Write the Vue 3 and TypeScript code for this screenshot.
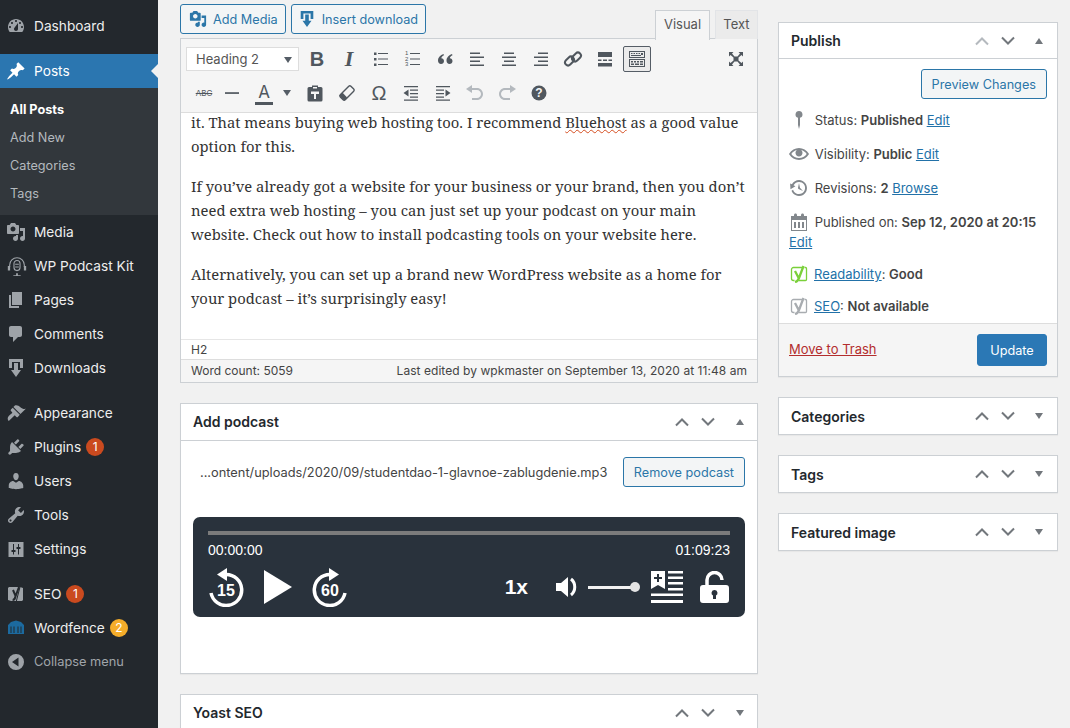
<template>
  <div class="page">
    <aside class="sidebar">
      <template v-for="item in menu" :key="item.label">
        <a class="menu-item" :class="{ active: item.active, gap: item.gap, dim: item.dim }">
          <span class="menu-icon">
            <svg v-if="item.icon === 'podcast'" viewBox="0 0 24 24" width="22" height="22">
              <path d="M4 13v-2a8 8 0 0 1 16 0v2" class="line" />
              <path d="M2 12h2.500v5H2zM19.500 12H22v5h-2.500z" />
              <rect x="8.700" y="6" width="6.600" height="11" rx="3.300" class="line" />
              <path d="M11 20h2v2h3v1H8v-1h3zM10 9.500h4v1h-4zM10 12.500h4v1h-4z" />
            </svg>
            <svg v-else-if="item.icon === 'seo'" viewBox="0 0 20 20" width="20" height="20">
              <path d="M3 3h11l3 1v12l-1 1H5l-3-1V4z" />
              <path d="M7 6l2.600 6L13 3M9.600 12c-.5 3-1.600 4-3 4" class="cut" />
              <path d="M14.500 1L10 18.500" class="slash" />
            </svg>
            <svg v-else-if="item.icon === 'wordfence'" viewBox="0 0 20 20" width="20" height="20" class="fence">
              <path d="M2 7l3-3 5-1.500L15 4l3 3v9H2zM4.500 8.500V15h1V8.500zM7.500 8.500V15h1V8.500zM11.500 8.500V15h1V8.500zM14.500 8.500V15h1V8.500z" fill-rule="evenodd" />
            </svg>
            <svg v-else viewBox="0 0 20 20" width="20" height="20"><path :d="icons[item.icon]" fill-rule="evenodd" /></svg>
          </span>
          <span class="menu-label">{{ item.label }}</span>
          <span v-if="item.badge" class="badge" :class="item.badgeClass">{{ item.badge }}</span>
        </a>
        <div v-if="item.active" class="submenu">
          <a v-for="(s, i) in subItems" :key="s" :class="{ current: i === 0 }">{{ s }}</a>
        </div>
      </template>
    </aside>

    <main class="content">
      <section class="col-main">
        <div class="editor-top">
          <button class="btn icon-btn">
            <svg viewBox="0 0 20 20" width="18" height="18"><path :d="icons.media" /></svg>
            Add Media
          </button>
          <button class="btn icon-btn tight">
            <svg viewBox="0 0 20 20" width="18" height="18"><path :d="icons.download" /></svg>
            Insert download
          </button>
          <div class="tabs">
            <span class="tab on">Visual</span>
            <span class="tab">Text</span>
          </div>
        </div>

        <div class="editor">
          <div class="toolbar">
            <div class="tool-row">
              <div class="format-select">Heading 2<i class="caret"></i></div>
              <span v-for="t in row1" :key="t.id" class="tool" :class="{ pressed: t.pressed }" :style="toolStyle(t)">
                <b v-if="t.text && t.id === 'bold'" class="glyph-b">{{ t.text }}</b>
                <em v-else-if="t.text" class="glyph-i">{{ t.text }}</em>
                <svg v-else-if="t.id === 'ol'" viewBox="0 0 20 20" width="20" height="20">
                  <text x="2" y="6" class="mini">1</text>
                  <text x="2" y="11.500" class="mini">2</text>
                  <text x="2" y="17" class="mini">3</text>
                  <path d="M7 4h10v1H7zM7 9.500h10v1H7zM7 15h10v1H7z" />
                </svg>
                <svg v-else-if="t.id === 'link'" viewBox="0 0 20 20" width="20" height="20">
                  <g class="line2">
                    <rect x="1.500" y="9" width="10" height="6" rx="3" transform="rotate(-45 6.500 12)" />
                    <rect x="8.500" y="5" width="10" height="6" rx="3" transform="rotate(-45 13.500 8)" />
                  </g>
                </svg>
                <svg v-else viewBox="0 0 20 20" width="20" height="20"><path :d="tools[t.id]" fill-rule="evenodd" /></svg>
              </span>
            </div>
            <div class="tool-row">
              <span v-for="t in row2" :key="t.id" class="tool" :style="toolStyle(t)">
                <span v-if="t.id === 'strike'" class="glyph-abc">ABC</span>
                <span v-else-if="t.id === 'color'" class="glyph-a">A</span>
                <span v-else-if="t.id === 'omega'" class="glyph-o">Ω</span>
                <i v-else-if="t.id === 'caret'" class="caret small"></i>
                <svg v-else-if="t.id === 'help'" viewBox="0 0 20 20" width="20" height="20">
                  <circle cx="10" cy="10" r="7.500" />
                  <text x="10" y="14" text-anchor="middle" class="help-q">?</text>
                </svg>
                <svg v-else-if="t.id === 'eraser'" viewBox="0 0 20 20" width="20" height="20">
                  <g transform="rotate(-45 10 10)">
                    <rect x="2.500" y="6.500" width="15" height="7" rx="1.500" class="line2 slim" />
                    <rect x="2.500" y="6.500" width="4.500" height="7" rx="1" />
                  </g>
                </svg>
                <svg v-else viewBox="0 0 20 20" width="20" height="20" :class="{ faded: t.id === 'undo' || t.id === 'redo' }">
                  <path :d="tools[t.id]" fill-rule="evenodd" :transform="t.id === 'redo' ? 'matrix(-1 0 0 1 20 0)' : undefined" />
                </svg>
              </span>
            </div>
          </div>
          <div class="post-body">
            <p>it. That means buying web hosting too. I recommend <span class="misspelled">Bluehost</span> as a good value option for this.</p>
            <p>If you’ve already got a website for your business or your brand, then you don’t need extra web hosting – you can just set up your podcast on your main website. Check out how to install podcasting tools on your website here.</p>
            <p>Alternatively, you can set up a brand new WordPress website as a home for your podcast – it’s surprisingly easy!</p>
          </div>
          <div class="path-bar">H2</div>
          <div class="status-bar">
            <span>Word count: 5059</span>
            <span class="edited">Last edited by wpkmaster on September 13, 2020 at 11:48 am</span>
          </div>
        </div>

        <div class="box podcast-box">
          <div class="box-head">
            <h2>Add podcast</h2>
            <span class="handles wide">
              <svg viewBox="0 0 16 10" width="16" height="10"><path d="M2 8.500l6-6 6 6" /></svg>
              <svg viewBox="0 0 16 10" width="16" height="10"><path d="M2 1.500l6 6 6-6" /></svg>
              <i class="tri up"></i>
            </span>
          </div>
          <div class="podcast-file">
            <span>...ontent/uploads/2020/09/studentdao-1-glavnoe-zablugdenie.mp3</span>
            <button class="btn">Remove podcast</button>
          </div>
          <div class="player">
            <div class="progress"></div>
            <div class="times"><span>00:00:00</span><span>01:09:23</span></div>
            <div class="controls">
              <div class="ctl-left">
                <span class="skip">
                  <svg viewBox="0 0 36 40" width="36" height="40">
                    <path d="M18 7.500A15.500 15.500 0 1 1 3 26" class="arc" />
                    <path d="M9 7.500L19 1v13z" />
                  </svg>
                  <b>15</b>
                </span>
                <svg viewBox="0 0 28 34" width="28" height="34" class="play"><path d="M0 0l28 17L0 34z" /></svg>
                <span class="skip">
                  <svg viewBox="0 0 36 40" width="36" height="40">
                    <path d="M18 7.500A15.500 15.500 0 1 0 33 26" class="arc" />
                    <path d="M27 7.500L17 1v13z" />
                  </svg>
                  <b>60</b>
                </span>
              </div>
              <div class="ctl-right">
                <b class="speed">1x</b>
                <svg viewBox="0 0 23 22" width="23" height="22" class="vol">
                  <path d="M0 7h5l7-6v20l-7-6H0z" />
                  <path d="M15 3c5 4 5 12 0 16" class="arc thin" />
                </svg>
                <span class="slider"><i></i></span>
                <svg viewBox="0 0 32 32" width="32" height="32" class="chapters">
                  <path d="M0 0h14v18l-7-4-7 4zM6 3v3H3v2h3v3h2V8h3V6H8V3z" fill-rule="evenodd" />
                  <path d="M17 0h15v2.500H17zM17 5.500h15V8H17zM17 11h15v2.500H17zM17 17h15v2.500H17zM0 22.500h32V25H0zM0 29h32v3H0z" />
                </svg>
                <svg viewBox="0 0 29 32" width="29" height="32" class="lock">
                  <path d="M7 14V9a7.500 7.500 0 0 1 15 0" class="arc" />
                  <path d="M3 14h23a3 3 0 0 1 3 3v12a3 3 0 0 1-3 3H3a3 3 0 0 1-3-3V17a3 3 0 0 1 3-3zM14.500 19a3 3 0 0 0-1.500 5.600V28h3v-3.400A3 3 0 0 0 14.500 19z" fill-rule="evenodd" />
                </svg>
              </div>
            </div>
          </div>
        </div>

        <div class="box">
          <div class="box-head">
            <h2>Yoast SEO</h2>
            <span class="handles wide">
              <svg viewBox="0 0 16 10" width="16" height="10"><path d="M2 8.500l6-6 6 6" /></svg>
              <svg viewBox="0 0 16 10" width="16" height="10"><path d="M2 1.500l6 6 6-6" /></svg>
              <i class="tri"></i>
            </span>
          </div>
          <div class="yoast-rest"></div>
        </div>
      </section>

      <section class="col-side">
        <div class="box publish">
          <div class="box-head">
            <h2>Publish</h2>
            <span class="handles">
              <svg viewBox="0 0 16 10" width="16" height="10" class="off"><path d="M2 8.500l6-6 6 6" /></svg>
              <svg viewBox="0 0 16 10" width="16" height="10"><path d="M2 1.500l6 6 6-6" /></svg>
              <i class="tri up"></i>
            </span>
          </div>
          <div class="preview-row"><button class="btn">Preview Changes</button></div>
          <div class="pub-row">
            <svg viewBox="0 0 20 20" width="20" height="20"><path d="M10 1a3.500 3.500 0 0 1 1 6.850V15l-1 4-1-4V7.850A3.500 3.500 0 0 1 10 1z" /></svg>
            Status: <b>Published</b> <a>Edit</a>
          </div>
          <div class="pub-row">
            <svg viewBox="0 0 20 20" width="20" height="20"><path :d="icons.eye" /></svg>
            Visibility: <b>Public</b> <a>Edit</a>
          </div>
          <div class="pub-row">
            <svg viewBox="0 0 20 20" width="20" height="20"><path :d="icons.backup" /></svg>
            Revisions: <b>2</b> <a>Browse</a>
          </div>
          <div class="pub-row">
            <svg viewBox="0 0 20 20" width="20" height="20"><path :d="icons.calendar" fill-rule="evenodd" /></svg>
            Published on: <b>Sep 12, 2020 at 20:15</b> <a>Edit</a>
          </div>
          <div class="pub-row seo-row">
            <svg viewBox="0 0 20 20" width="20" height="20" class="yoast good">
              <path d="M13 3.500H4.500A2 2 0 0 0 2.500 5.500v9a2 2 0 0 0 2 2h1M15.500 3.500h1a1 1 0 0 1 1 1v11a1 1 0 0 1-1 1H10" class="y-frame" />
              <path d="M6 7l3.400 6.500M14.500 2l-4.500 12c-.7 2-1.700 3.500-4 4" class="y-mark" />
            </svg>
            <a>Readability</a>: <b>Good</b>
          </div>
          <div class="pub-row seo-row">
            <svg viewBox="0 0 20 20" width="20" height="20" class="yoast none">
              <path d="M13 3.500H4.500A2 2 0 0 0 2.500 5.500v9a2 2 0 0 0 2 2h1M15.500 3.500h1a1 1 0 0 1 1 1v11a1 1 0 0 1-1 1H10" class="y-frame" />
              <path d="M6 7l3.400 6.500M14.500 2l-4.500 12c-.7 2-1.700 3.500-4 4" class="y-mark" />
            </svg>
            <a>SEO</a>: <b>Not available</b>
          </div>
          <div class="pub-actions">
            <a class="trash">Move to Trash</a>
            <button class="btn primary">Update</button>
          </div>
        </div>

        <div v-for="name in closedBoxes" :key="name" class="box">
          <div class="box-head">
            <h2>{{ name }}</h2>
            <span class="handles">
              <svg viewBox="0 0 16 10" width="16" height="10"><path d="M2 8.500l6-6 6 6" /></svg>
              <svg viewBox="0 0 16 10" width="16" height="10"><path d="M2 1.500l6 6 6-6" /></svg>
              <i class="tri"></i>
            </span>
          </div>
        </div>
      </section>
    </main>
  </div>
</template>

<script setup lang="ts">
interface MenuItem {
  label: string
  icon: string
  active?: boolean
  gap?: boolean
  dim?: boolean
  badge?: string
  badgeClass?: string
}

interface Tool {
  id: string
  text?: string
  w?: number
  ml?: number
  pressed?: boolean
}

const icons: Record<string, string> = {
  dashboard:
    'M3.760 16h12.480c1.100-1.370 1.760-3.110 1.760-5 0-4.420-3.580-8-8-8s-8 3.580-8 8c0 1.890.66 3.630 1.760 5zM10 4c.55 0 1 .45 1 1s-.45 1-1 1-1-.45-1-1 .45-1 1-1zM6 6c.55 0 1 .45 1 1s-.45 1-1 1-1-.45-1-1 .45-1 1-1zm8 0c.55 0 1 .45 1 1s-.45 1-1 1-1-.45-1-1 .45-1 1-1zm-5.370 5.550L12 7v6c0 1.100-.9 2-2 2s-2-.9-2-2c0-.57.24-1.080.63-1.450zM4 10c.55 0 1 .45 1 1s-.45 1-1 1-1-.45-1-1 .45-1 1-1zm12 0c.55 0 1 .45 1 1s-.45 1-1 1-1-.45-1-1 .45-1 1-1z',
  pin: 'M10.440 3.020l1.820-1.820 6.360 6.350-1.830 1.820c-1.050-.68-2.480-.57-3.410.36l-.75.75c-.92.93-1.040 2.350-.35 3.410l-1.830 1.820-2.410-2.410-2.800 2.790c-.42.42-3.380 2.710-3.800 2.290s1.860-3.390 2.280-3.810l2.790-2.790L4.100 9.360l1.830-1.820c1.050.69 2.480.57 3.400-.36l.75-.75c.93-.92 1.050-2.350.36-3.410z',
  media:
    'M13 11V4c0-.55-.45-1-1-1h-1.670L9 1H5L3.670 3H2c-.55 0-1 .45-1 1v7c0 .55.45 1 1 1h10c.55 0 1-.45 1-1zM7 4.500c1.380 0 2.500 1.120 2.500 2.500S8.380 9.500 7 9.500 4.500 8.380 4.500 7 5.620 4.500 7 4.500zM14 6h5v10.500c0 1.380-1.120 2.500-2.500 2.500S14 17.880 14 16.500s1.120-2.500 2.500-2.500c.17 0 .34.02.5.05V9h-3V6zm-4 8.050V13h2v3.500c0 1.380-1.120 2.500-2.500 2.500S7 17.880 7 16.500 8.120 14 9.500 14c.17 0 .34.02.5.05z',
  pages: 'M6 15V2h10v13H6zm-1 1h8v2H3V5h2v11z',
  comments: 'M5 2h9c1.100 0 2 .9 2 2v7c0 1.100-.9 2-2 2h-2l-5 5v-5H5c-1.100 0-2-.9-2-2V4c0-1.100.9-2 2-2z',
  download: 'M3 1h14v9h-3V4H6v6H3zM8 5h4v7h3l-5 7-5-7h3z',
  appearance:
    'M14.480 11.060L7.410 3.990l1.500-1.500c.5-.56 2.300-.47 3.510.32 1.210.8 1.430 1.280 2.910 2.100 1.180.64 2.450 1.260 4.450.85zm-.71.71L6.700 4.700 4.930 6.470c-.39.39-.39 1.020 0 1.410l1.060 1.060c.39.39.39 1.030 0 1.420-.6.6-1.430 1.110-2.210 1.690-.35.26-.7.53-1.010.84-1.430 1.430-1.400 3.750.03 5.180l5.180-5.180c.39-.39 1.030-.39 1.420 0l1.060 1.060c.39.39 1.020.39 1.410 0z',
  plugins:
    'M13.110 4.360L9.870 7.600 8 5.730l3.240-3.240c.35-.34 1.050-.2 1.560.32.52.51.66 1.210.31 1.550zm-8 1.770l.91-1.120 9.010 9.010-1.190.84c-.71.71-2.630 1.160-3.820 1.160H6.140L4.900 17.260c-.59.59-1.540.59-2.120 0-.59-.58-.59-1.530 0-2.120l1.240-1.240v-3.880c0-1.130.4-3.190 1.090-3.890zm7.260 3.970l3.240-3.240c.34-.35 1.040-.21 1.550.31.52.51.66 1.210.31 1.550l-3.240 3.250z',
  users:
    'M10 9.250c-2.270 0-2.730-3.440-2.730-3.440C7 4.020 7.820 2 9.970 2c2.160 0 2.980 2.020 2.710 3.810 0 0-.41 3.440-2.680 3.440zm0 2.570L12.720 10c2.390 0 4.520 2.330 4.520 4.530v2.490s-3.650 1.130-7.240 1.130c-3.650 0-7.240-1.130-7.240-1.130v-2.490c0-2.250 1.940-4.480 4.470-4.480z',
  tools:
    'M16.680 9.770c-1.340 1.340-3.300 1.670-4.950.99l-5.410 6.520c-.99.99-2.590.99-3.580 0s-.99-2.590 0-3.570l6.520-5.420c-.68-1.650-.35-3.610.99-4.950 1.280-1.280 3.120-1.620 4.720-1.060l-2.890 2.890 2.820 2.820 2.860-2.870c.53 1.580.18 3.390-1.080 4.650zM3.810 16.210c.4.39 1.040.39 1.430 0 .4-.4.4-1.040 0-1.430-.39-.4-1.030-.4-1.430 0-.39.39-.39 1.030 0 1.430z',
  settings:
    'M2.500 3h15v15h-15zM8 11V5H7v6H5.500v2H7v2.500h1V13h1.500v-2zM13 8V5h-1v3h-1.500v2H12v5.500h1V10h1.500V8z',
  collapse: 'M10 2a8 8 0 1 0 0 16 8 8 0 0 0 0-16zM12.500 5.500v9L6 10z',
  eye: 'M19.700 9.400C17.700 6 14 3.900 10 3.900S2.300 6 .3 9.400L0 10l.3.6c2 3.400 5.700 5.500 9.700 5.500s7.700-2.100 9.700-5.500l.3-.6-.3-.6zM10 14.100c-3.100 0-6-1.600-7.700-4.100C3.600 8 5.700 6.600 8 6.100c-.9.6-1.500 1.700-1.500 2.900 0 1.900 1.600 3.500 3.500 3.500s3.500-1.600 3.500-3.500c0-1.200-.6-2.300-1.500-2.900 2.300.5 4.400 1.900 5.700 3.900-1.700 2.500-4.600 4.100-7.700 4.100z',
  backup:
    'M13.650 2.880c3.930 2.010 5.480 6.840 3.470 10.770s-6.830 5.480-10.770 3.470c-1.870-.96-3.200-2.560-3.860-4.400l1.640-1.030c.45 1.570 1.520 2.950 3.080 3.760 3.010 1.540 6.690.35 8.230-2.660 1.550-3.010.36-6.690-2.650-8.240C9.780 3.010 6.100 4.200 4.560 7.210l1.880.97-4.950 3.080-.39-5.820 1.780.91C4.900 2.400 9.750.89 13.650 2.880zm-4.360 7.830C9.110 10.530 9 10.280 9 10c0-.07.03-.12.04-.19h-.01L10 5l.97 4.810L14 13l-4.500-2.120.02-.02c-.08-.04-.16-.09-.23-.15z',
  calendar:
    'M15 4h3v15H2V4h3V3c0-.41.15-.76.44-1.060.29-.29.65-.44 1.060-.44s.77.15 1.060.44c.29.3.44.65.44 1.060v1h4V3c0-.41.15-.76.44-1.060.29-.29.65-.44 1.060-.44s.77.15 1.060.44c.29.3.44.65.44 1.060v1zm2 14V8H3v10h14zM5 10h2v6H5zM9 10h2v6H9zM13 10h2v6h-2z',
}

const tools: Record<string, string> = {
  ul: 'M3 3.500h2.500V6H3zM3 9h2.500v2.500H3zM3 14.500h2.500V17H3zM7 4h10v1H7zM7 9.500h10v1H7zM7 15h10v1H7z',
  quote:
    'M8.500 5C5.500 6 3 8.500 3 11.500 3 13.700 4.300 15 6 15s3-1.300 3-3-1.200-2.800-2.700-2.800c.3-1.200 1.200-2.200 2.700-2.900zM17 5c-3 1-5.500 3.500-5.500 6.500 0 2.200 1.300 3.500 3 3.500s3-1.300 3-3-1.200-2.800-2.700-2.800c.3-1.200 1.200-2.200 2.700-2.900z',
  alignleft: 'M3 3.500h10v1.400H3zM3 7.500h14v1.400H3zM3 11.500h10v1.400H3zM3 15.500h14v1.400H3z',
  aligncenter: 'M5 3.500h10v1.400H5zM3 7.500h14v1.400H3zM5 11.500h10v1.400H5zM3 15.500h14v1.400H3z',
  alignright: 'M7 3.500h10v1.400H7zM3 7.500h14v1.400H3zM7 11.500h10v1.400H7zM3 15.500h14v1.400H3z',
  more: 'M3 3h14v5H3zM3 10.500h3.500V12H3zM8 10.500h4V12H8zM13.500 10.500H17V12h-3.500zM3 14h14v3.500H3z',
  kitchen:
    'M2 2h16v7H2zM3 3v5h14V3zM4 4h1.500v1H4zM6.500 4H8v1H6.500zM9 4h1.500v1H9zM11.500 4H13v1h-1.500zM14 4h2v2h-2zM4 6h10v1H4zM2 10h16v8H2zM3 11v6h14v-6zM4 12h2v1.500H4zM7 12h2v1.500H7zM10 12h2v1.500h-2zM13 12h3v1.500h-3zM4 14.500h3V16H4zM8 14.500h4V16H8zM13 14.500h3V16h-3z',
  fullscreen:
    'M3 3h4.500L6 4.500 8.500 7.500h3L14 4.500 12.500 3H17v4.500L15.500 6 12.500 8.500v3L15.500 14 17 12.500V17h-4.500l1.500-1.500L11.500 12.500h-3L6 15.500 7.500 17H3v-4.500L4.500 14l3-2.500v-3L4.500 6 3 7.500z',
  hr: 'M3 9.200h14v1.700H3z',
  paste:
    'M7 2.500h6V4h3a1.500 1.500 0 0 1 1.500 1.500V17a1.500 1.500 0 0 1-1.500 1.500H4A1.500 1.500 0 0 1 2.500 17V5.500A1.500 1.500 0 0 1 4 4h3zM8 4v1.500h4V4zM6 8.500V11h3v5h2v-5h3V8.500z',
  outdent:
    'M3 3h14v1.300H3zM9 6.500h8v1.300H9zM9 10h8v1.300H9zM9 13.500h8v1.300H9zM3 16.500h14v1.300H3zM7.500 6.500v7L2.500 10z',
  indent:
    'M3 3h14v1.300H3zM3 6.500h8v1.300H3zM3 10h8v1.300H3zM3 13.500h8v1.300H3zM3 16.500h14v1.300H3zM12.500 6.500v7l5-3.500z',
  undo: 'M12 5H7V2L1 6l6 4V7h5c2.200 0 4 1.800 4 4s-1.800 4-4 4H7v2h5c3.300 0 6-2.700 6-6s-2.700-6-6-6z',
  redo: 'M12 5H7V2L1 6l6 4V7h5c2.200 0 4 1.800 4 4s-1.800 4-4 4H7v2h5c3.300 0 6-2.700 6-6s-2.700-6-6-6z',
}

const menu: MenuItem[] = [
  { label: 'Dashboard', icon: 'dashboard' },
  { label: 'Posts', icon: 'pin', active: true, gap: true },
  { label: 'Media', icon: 'media' },
  { label: 'WP Podcast Kit', icon: 'podcast' },
  { label: 'Pages', icon: 'pages' },
  { label: 'Comments', icon: 'comments' },
  { label: 'Downloads', icon: 'download' },
  { label: 'Appearance', icon: 'appearance', gap: true },
  { label: 'Plugins', icon: 'plugins', badge: '1' },
  { label: 'Users', icon: 'users' },
  { label: 'Tools', icon: 'tools' },
  { label: 'Settings', icon: 'settings' },
  { label: 'SEO', icon: 'seo', gap: true, badge: '1' },
  { label: 'Wordfence', icon: 'wordfence', badge: '2', badgeClass: 'amber' },
  { label: 'Collapse menu', icon: 'collapse', dim: true },
]

const subItems = ['All Posts', 'Add New', 'Categories', 'Tags']
const closedBoxes = ['Categories', 'Tags', 'Featured image']

const row1: Tool[] = [
  { id: 'bold', text: 'B', ml: 2 },
  { id: 'italic', text: 'I' },
  { id: 'ul' },
  { id: 'ol' },
  { id: 'quote' },
  { id: 'alignleft' },
  { id: 'aligncenter' },
  { id: 'alignright' },
  { id: 'link' },
  { id: 'more' },
  { id: 'kitchen', w: 28, ml: 2, pressed: true },
  { id: 'fullscreen', ml: 69 },
]

const row2: Tool[] = [
  { id: 'strike', w: 28, ml: 4 },
  { id: 'hr', w: 28 },
  { id: 'color', w: 36 },
  { id: 'caret', w: 10 },
  { id: 'paste', ml: 7 },
  { id: 'eraser' },
  { id: 'omega' },
  { id: 'outdent' },
  { id: 'indent' },
  { id: 'undo' },
  { id: 'redo' },
  { id: 'help' },
]

function toolStyle(t: Tool) {
  return { width: `${t.w ?? 32}px`, marginLeft: `${t.ml ?? 0}px` }
}
</script>

<style>
html,
body {
  margin: 0;
  background: #f1f1f1;
  overflow: hidden;
}
</style>

<style scoped>
.page {
  display: grid;
  grid-template-columns: 158px 1fr;
  height: 728px;
  overflow: hidden;
  font-family: Inter, "Liberation Sans", sans-serif;
  font-size: 13px;
  color: #444;
  background: #f1f1f1;
}

/* left menu */
.sidebar {
  background: #23282d;
  color: #eee;
  padding-top: 9px;
  font-size: 13.7px;
}
.menu-item {
  display: flex;
  align-items: center;
  height: 34px;
  position: relative;
}
.menu-item.gap {
  margin-top: 11px;
}
.menu-label {
  margin-top: -1px;
}
.menu-icon {
  width: 34px;
  padding-left: 6px;
  box-sizing: border-box;
  display: flex;
  fill: #9ea3a8;
  flex: none;
}
.menu-item .line {
  fill: none;
  stroke: #9ea3a8;
  stroke-width: 1.200;
}
.menu-item .cut {
  fill: none;
  stroke: #23282d;
  stroke-width: 2;
}
.menu-item .slash {
  fill: none;
  stroke: #23282d;
  stroke-width: 1;
}
.menu-item .fence {
  fill: #1c6a9f;
}
.menu-item.active {
  background: #2b76b0;
  color: #fff;
}
.menu-item.active .menu-icon {
  fill: #fff;
}
.menu-item.active::after {
  content: "";
  position: absolute;
  right: 0;
  top: 10px;
  border: 7px solid transparent;
  border-right-color: #f1f1f1;
  border-left-width: 0;
}
.menu-item.dim {
  color: #a0a5aa;
  font-size: 12.8px;
}
.submenu {
  background: #32373c;
  padding: 8px 0 7px;
  font-size: 12.7px;
  color: #b4b9be;
}
.submenu a {
  display: block;
  height: 28px;
  line-height: 27px;
  padding-left: 10px;
}
.submenu .current {
  color: #fff;
  font-weight: 700;
}
.badge {
  width: 18px;
  height: 18px;
  border-radius: 50%;
  background: #ca4a1f;
  color: #fff;
  font-size: 12px;
  line-height: 18px;
  text-align: center;
  margin-left: 5px;
}
.badge.amber {
  background: #f5ad2a;
}

/* page columns */
.content {
  display: grid;
  grid-template-columns: 578px 280px;
  column-gap: 20px;
  padding: 4px 0 0 22px;
  align-items: start;
}
.col-side {
  padding-top: 18px;
}
.btn {
  font: inherit;
  font-size: 12.7px;
  height: 30px;
  padding: 0 10px;
  border: 1px solid #2b76a8;
  border-radius: 3px;
  background: #f3f5f6;
  color: #2b76a8;
}
.btn.primary {
  background: #2b78b5;
  border-color: #2b78b5;
  color: #fff;
  height: 32px;
  width: 70px;
}
.icon-btn {
  display: inline-flex;
  align-items: center;
  gap: 6px;
  fill: #2b76a8;
  padding: 0 7px 0 8px;
}
.icon-btn.tight {
  padding-left: 6px;
}

/* editor */
.editor-top {
  display: flex;
  gap: 5px;
  height: 35px;
  position: relative;
  z-index: 1;
}
.tabs {
  margin-left: auto;
  display: flex;
  gap: 5px;
  align-self: flex-end;
  height: 29px;
}
.tab {
  border: 1px solid #e2e4e7;
  border-bottom: 0;
  background: #ebebeb;
  color: #555;
  padding: 0 6px;
  width: 43px;
  box-sizing: border-box;
  text-align: center;
  line-height: 27px;
}
.tab.on {
  width: 55px;
  background: #f5f5f5;
  border-color: #ccd0d4;
  height: 30px;
  position: relative;
}
.editor {
  margin-top: -1px;
  border: 1px solid #ccd0d4;
  background: #fff;
}
.toolbar {
  background: #f5f5f5;
  border-bottom: 1px solid #ddd;
  height: 74px;
  box-sizing: border-box;
  padding: 3px 0 0 5px;
}
.tool-row {
  display: flex;
  align-items: center;
  height: 34px;
}
.format-select {
  width: 113px;
  height: 24px;
  box-sizing: border-box;
  border: 1px solid #ddd;
  background: #fff;
  line-height: 22px;
  padding-left: 9px;
  color: #555;
  position: relative;
}
.caret {
  display: inline-block;
  width: 0;
  height: 0;
  border: 4px solid transparent;
  border-top: 6px solid #555d66;
  border-bottom: 0;
}
.format-select .caret {
  position: absolute;
  right: 6px;
  top: 9px;
}
.tool {
  display: flex;
  align-items: center;
  justify-content: center;
  flex: none;
  height: 26px;
  box-sizing: border-box;
  fill: #50575e;
  color: #50575e;
}
.tool.pressed {
  border: 1px solid #555d66;
  border-radius: 2px;
  background: #ebebeb;
}
.tool .faded {
  fill: #b4b9be;
}
.glyph-b {
  font: 700 20px "Liberation Sans", sans-serif;
}
.glyph-i {
  font: italic 700 22px "Liberation Serif", serif;
}
.glyph-abc {
  font-size: 8px;
  text-decoration: line-through;
}
.glyph-a {
  font-size: 17px;
  line-height: 20px;
  border-bottom: 3px solid #50575e;
  padding: 0 3px;
}
.glyph-o {
  font: 400 20px "Liberation Sans", sans-serif;
}
.mini {
  font: 6px "Liberation Sans", sans-serif;
}
.help-q {
  font: 700 12px "Liberation Sans", sans-serif;
  fill: #f5f5f5;
}
.line2 {
  fill: none;
  stroke: #50575e;
  stroke-width: 2;
}
.line2.slim {
  stroke-width: 1.400;
}
.post-body {
  height: 226px;
  overflow: hidden;
  box-sizing: border-box;
  padding: 0 10px;
  font-family: "Noto Serif", "DejaVu Serif", "Liberation Serif", serif;
  font-size: 14.8px;
  line-height: 24px;
  color: #333;
}
.post-body p {
  margin: 0 0 16px;
}
.post-body p:first-child {
  margin-top: -3px;
}
.misspelled {
  text-decoration: underline wavy #d54e21 1px;
}
.path-bar {
  height: 20px;
  box-sizing: border-box;
  border-top: 1px solid #e6e6e6;
  padding-left: 10px;
  font-size: 12px;
  line-height: 19px;
}
.status-bar {
  display: flex;
  justify-content: space-between;
  height: 23px;
  box-sizing: border-box;
  border-top: 1px solid #ddd;
  padding: 0 10px;
  background: #f5f5f5;
  font-size: 12px;
  line-height: 21px;
}
.edited {
  letter-spacing: 0.05px;
}

/* meta boxes */
.box {
  background: #fff;
  border: 1px solid #ccd0d4;
  margin-bottom: 20px;
  box-shadow: 0 1px 1px rgba(0, 0, 0, 0.04);
}
.podcast-box {
  margin-top: 20px;
  height: 271px;
  box-sizing: border-box;
}
.box-head {
  display: flex;
  align-items: center;
  height: 36px;
  box-sizing: border-box;
  padding: 0 12px;
  font-size: 14px;
}
.box-head h2 {
  margin: 0;
  font-size: 14px;
  font-weight: 600;
  color: #23282d;
}
.col-main .box-head h2 {
  margin-top: -1px;
}
.handles {
  margin-left: auto;
  display: flex;
  align-items: center;
  gap: 10px;
  fill: none;
  stroke: #72777c;
  stroke-width: 2;
}
.handles svg path {
  fill: none;
}
.handles .off {
  stroke: #b4b9be;
}
.tri {
  width: 0;
  height: 0;
  margin: 0 2px 0 9px;
  border: 4px solid transparent;
  border-top: 6px solid #72777c;
  border-bottom: 0;
}
.handles.wide .tri {
  margin: 0 1px 0 10px;
}
.tri.up {
  border-top: 0;
  border-bottom: 6px solid #72777c;
}
.podcast-file {
  display: flex;
  align-items: center;
  justify-content: space-between;
  border-top: 1px solid #ccd0d4;
  padding: 16px 12px 0 19px;
  font-size: 12.8px;
}
.player {
  margin: 30px 12px 0;
  height: 100px;
  box-sizing: border-box;
  padding: 14px 15px 0;
  background: #29323c;
  border-radius: 7px;
  color: #fff;
  fill: #fff;
  font-family: "Liberation Sans", Arial, sans-serif;
}
.progress {
  height: 4px;
  background: #7b7b7b;
}
.times {
  display: flex;
  justify-content: space-between;
  font-size: 14px;
  line-height: 16px;
  margin-top: 7px;
}
.controls {
  display: flex;
  justify-content: space-between;
  align-items: center;
  height: 48px;
  margin-top: 5px;
}
.ctl-left {
  display: flex;
  align-items: center;
  gap: 20px;
}
.ctl-right {
  display: flex;
  align-items: center;
}
.skip {
  position: relative;
  display: flex;
}
.skip b {
  position: absolute;
  left: 0;
  right: 0;
  top: 13px;
  text-align: center;
  font-size: 16px;
  line-height: 22px;
}
.arc {
  fill: none;
  stroke: #fff;
  stroke-width: 3.500;
}
.arc.thin {
  stroke-width: 3;
}
.speed {
  font-size: 21px;
  line-height: 24px;
  margin-right: 28px;
}
.slider {
  width: 48px;
  height: 3px;
  margin: 0 15px 0 9px;
  background: #f1f1f1;
  position: relative;
}
.slider i {
  position: absolute;
  right: -4px;
  top: -3.500px;
  width: 10px;
  height: 10px;
  border-radius: 50%;
  background: #e4e4e4;
}
.chapters {
  margin-right: 17px;
}
.lock {
  margin-right: 1px;
}

/* publish box */
.publish .box-head {
  border-bottom: 1px solid #ccd0d4;
}
.preview-row {
  display: flex;
  justify-content: flex-end;
  padding: 10px 10px 4px;
}
.pub-row {
  padding: 7px 10px;
  line-height: 20px;
}
.pub-row svg {
  vertical-align: -5px;
  margin-right: 2px;
  fill: #82878c;
}
.pub-row b {
  font-weight: 600;
}
.pub-row a {
  color: #2271a8;
  text-decoration: underline;
}
.seo-row {
  padding: 5px 10px 7px;
}
.pub-row .yoast {
  fill: none;
  margin-right: 5px;
}
.y-frame {
  stroke-width: 1.300;
  fill: none;
}
.y-mark {
  stroke-width: 2.300;
  fill: none;
}
.good {
  stroke: #7ad03a;
}
.none {
  stroke: #a8acb0;
}
.pub-actions {
  display: flex;
  align-items: center;
  justify-content: space-between;
  height: 52px;
  padding: 0 10px;
  border-top: 1px solid #ddd;
  background: #f5f5f5;
}
.trash {
  margin-top: -2px;
  color: #b32d2e;
  text-decoration: underline;
}
.yoast-rest {
  height: 60px;
}
</style>
